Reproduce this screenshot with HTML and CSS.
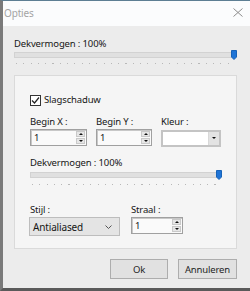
FILE: index.html
```html
<!DOCTYPE html>
<html>
<head>
<meta charset="utf-8">
<link rel="stylesheet" href="styles.css">
</head>
<body>
<div class="window">
  <div class="titlebar">
    <span class="title">Opties</span>
    <svg class="close" width="10" height="9" viewBox="0 0 10 9"><path d="M0.5 0.5 L9.5 8.5 M9.5 0.5 L0.5 8.5" stroke="#8c8c8c" stroke-width="1" fill="none"/></svg>
  </div>
  <div class="content">
    <div class="label">Dekvermogen : 100%</div>
    <div class="slider">
      <div class="track"></div>
      <div class="ticks"></div>
      <svg class="thumb" width="6" height="10" viewBox="0 0 6 10"><path d="M0.5 0.5 H5.5 V7 L3 9.5 L0.5 7 Z" fill="#1f74d6" stroke="#1763b8" stroke-width="1"/></svg>
    </div>
    <div class="panel">
      <div class="check-row">
        <span class="checkbox"><svg width="9" height="9" viewBox="0 0 9 9"><path d="M1 4.5 L3.5 7 L8 1.5" stroke="#222" stroke-width="1.2" fill="none"/></svg></span>
        <span>Slagschaduw</span>
      </div>
      <div class="fields">
        <div class="field">
          <div class="flabel">Begin X :</div>
          <div class="spin w57"><span class="val">1</span><span class="btns"><span class="up"></span><span class="down"></span></span></div>
        </div>
        <div class="field">
          <div class="flabel">Begin Y :</div>
          <div class="spin w56"><span class="val">1</span><span class="btns"><span class="up"></span><span class="down"></span></span></div>
        </div>
        <div class="field">
          <div class="flabel">Kleur :</div>
          <div class="colorbox"><span class="swatch"></span><span class="dd"><span class="down"></span></span></div>
        </div>
      </div>
      <div class="label">Dekvermogen : 100%</div>
      <div class="slider inner">
        <div class="track"></div>
        <div class="ticks"></div>
        <svg class="thumb" width="6" height="10" viewBox="0 0 6 10"><path d="M0.5 0.5 H5.5 V7 L3 9.5 L0.5 7 Z" fill="#1f74d6" stroke="#1763b8" stroke-width="1"/></svg>
      </div>
      <div class="fields bottom">
        <div class="field">
          <div class="flabel">Stijl :</div>
          <div class="combo"><span>Antialiased</span><svg width="7" height="4" viewBox="0 0 7 4"><path d="M0.5 0.5 L3.5 3.5 L6.5 0.5" stroke="#555" stroke-width="1" fill="none"/></svg></div>
        </div>
        <div class="field">
          <div class="flabel">Straal :</div>
          <div class="spin w52"><span class="val">1</span><span class="btns"><span class="up"></span><span class="down"></span></span></div>
        </div>
      </div>
    </div>
    <div class="buttons">
      <button class="btn ok">Ok</button>
      <button class="btn">Annuleren</button>
    </div>
  </div>
</div>
</body>
</html>
```
FILE: styles.css
```css
html, body {
  margin: 0;
  padding: 0;
}
body {
  width: 250px;
  height: 291px;
  overflow: hidden;
  font-family: "Noto Sans", "Open Sans", sans-serif;
  font-size: 9.5px;
  letter-spacing: -0.15px;
  color: #161616;
}
.window {
  box-sizing: border-box;
  width: 250px;
  height: 291px;
  border-top: 1px solid #5d7e93;
  border-left: 3px solid #7a7a7a;
  border-bottom: 3px solid #5a5a5a;
  display: flex;
  flex-direction: column;
  background: #ececec;
}
.titlebar {
  height: 23px;
  background: #fbfcfd;
  display: flex;
  align-items: center;
  justify-content: space-between;
  padding: 0 7px 2px 1px;
}
.title {
  color: #a4a4a4;
  font-size: 10px;
}
.close {
  display: block;
}
.content {
  flex: 1;
  padding: 12px 13px 0 11px;
  display: flex;
  flex-direction: column;
}
.label {
  line-height: 12px;
  height: 12px;
  white-space: nowrap;
}
.slider {
  position: relative;
  height: 16px;
}
.slider .track {
  position: absolute;
  left: 0;
  right: 4px;
  top: 2px;
  height: 4px;
  background: #e0e0e0;
  border: 1px solid #d2d2d2;
}
.slider .ticks {
  position: absolute;
  left: 2px;
  right: 2px;
  top: 13px;
  height: 1px;
  background: repeating-linear-gradient(90deg, #b8b8b8 0 1px, transparent 1px 7.3px);
}
.slider .thumb {
  position: absolute;
  right: 0;
  top: 0;
}
.panel {
  margin-top: 9px;
  height: 174px;
  box-sizing: border-box;
  border: 1px solid #dadada;
  background: #f5f5f5;
  padding: 18px 14px 0 15px;
  display: flex;
  flex-direction: column;
}
.check-row {
  display: flex;
  align-items: center;
  gap: 3px;
  height: 12px;
  line-height: 12px;
}
.checkbox {
  width: 9px;
  height: 9px;
  border: 1px solid #333;
  background: #fff;
  display: flex;
  align-items: center;
  justify-content: center;
}
.checkbox svg { display: block; }
.fields {
  display: flex;
  gap: 9px;
  margin-top: 10px;
}
.field {
  display: flex;
  flex-direction: column;
  gap: 1px;
}
.flabel {
  line-height: 12px;
  height: 12px;
}
.spin {
  box-sizing: border-box;
  height: 17px;
  border: 1px solid #a0a0a0;
  box-shadow: inset 1px 1px 0 #c8c8c8;
  background: #fafafa;
  display: flex;
  align-items: center;
  justify-content: space-between;
  padding: 0 1px 0 3px;
}
.w57 { width: 57px; }
.w56 { width: 56px; }
.w52 { width: 52px; }
.spin .btns {
  display: flex;
  flex-direction: column;
  gap: 1px;
}
.spin .up, .spin .down, .colorbox .down {
  width: 9px;
  height: 6px;
  background: #e6e6e6;
  border: 1px solid #c9c9c9;
  box-sizing: border-box;
  position: relative;
}
.spin .up::after, .spin .down::after, .colorbox .down::after {
  content: "";
  position: absolute;
  left: 2px;
  border-left: 2px solid transparent;
  border-right: 2px solid transparent;
}
.spin .up::after {
  top: 1px;
  border-bottom: 2px solid #111;
}
.spin .down::after, .colorbox .down::after {
  top: 1px;
  border-top: 2px solid #111;
}
.colorbox {
  box-sizing: border-box;
  width: 60px;
  height: 17px;
  margin-top: 1px;
  border: 2px solid #c4c4c4;
  background: #d8d8d8;
  display: flex;
  gap: 1px;
}
.colorbox .swatch {
  flex: 1;
  background: #fff;
}
.colorbox .dd {
  width: 10px;
  background: #e3e3e3;
  display: flex;
  align-items: center;
  justify-content: center;
}
.colorbox .dd .down {
  border: none;
  background: transparent;
}
.slider.inner {
  height: 18px;
  margin-top: 0;
}
.slider.inner .track {
  top: 3px;
  right: 3px;
  height: 4px;
}
.slider.inner .thumb {
  top: 1px;
}
.slider.inner .ticks {
  top: 15px;
}
.panel > .label {
  margin-top: 10px;
}
.fields.bottom {
  margin-top: 17px;
  gap: 11px;
}
.combo {
  box-sizing: border-box;
  width: 91px;
  height: 19px;
  margin-left: -1px;
  border: 1px solid #bdbdbd;
  background: #e4e4e4;
  display: flex;
  align-items: center;
  justify-content: space-between;
  padding: 0 7px 0 3px;
  font-size: 10px;
}
.combo svg { display: block; }
.buttons {
  display: flex;
  justify-content: flex-end;
  gap: 10px;
  margin-top: 10px;
}
.btn {
  box-sizing: border-box;
  width: 59px;
  height: 20px;
  border: 1px solid #adadad;
  background: #e1e1e1;
  font-family: "Noto Sans", "Open Sans", sans-serif;
  font-size: 9.5px;
  letter-spacing: -0.15px;
  color: #1e1e1e;
  padding: 0;
}
.btn.ok {
  width: 58px;
}
```
